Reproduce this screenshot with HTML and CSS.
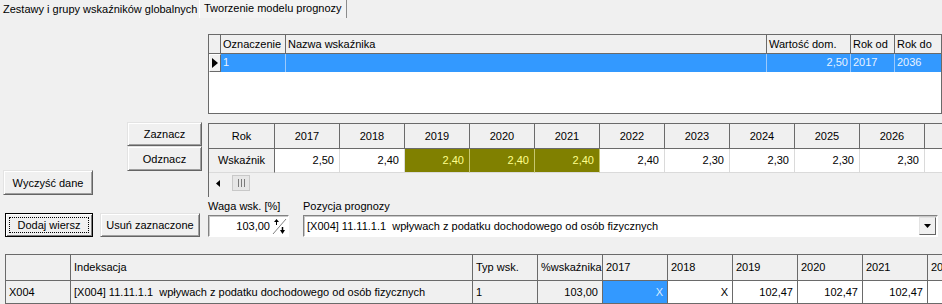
FILE: index.html
```html
<!DOCTYPE html>
<html lang="pl">
<head>
<meta charset="utf-8">
<title>Tworzenie modelu prognozy</title>
<link rel="stylesheet" href="styles.css">
</head>
<body>
<div class="tabs">
  <div class="tab tab-first">Zestawy i grupy wskaźników globalnych</div>
  <div class="tab tab-active">Tworzenie modelu prognozy</div>
</div>

<div class="top-grid">
  <div class="tg-row tg-head">
    <div class="c ind-h"></div>
    <div class="c">Oznaczenie</div>
    <div class="c">Nazwa wskaźnika</div>
    <div class="c">Wartość dom.</div>
    <div class="c">Rok od</div>
    <div class="c">Rok do</div>
  </div>
  <div class="tg-row tg-sel">
    <div class="c ind"><svg width="8" height="12" viewBox="0 0 8 12"><polygon points="1,1 7,6 1,11" fill="#000"/></svg></div>
    <div class="c">1</div>
    <div class="c"></div>
    <div class="c num">2,50</div>
    <div class="c">2017</div>
    <div class="c">2036</div>
  </div>
</div>

<div class="row2">
  <div class="left2">
    <div class="btn-stack">
      <button class="btn btn-z">Zaznacz</button>
      <button class="btn btn-o">Odznacz</button>
    </div>
    <button class="btn btn-clear">Wyczyść dane</button>
  </div>
  <div class="year-grid">
    <div class="yg-row yg-head">
      <div class="yc lab">Rok</div>
      <div class="yc">2017</div><div class="yc">2018</div><div class="yc">2019</div><div class="yc">2020</div><div class="yc">2021</div><div class="yc">2022</div><div class="yc">2023</div><div class="yc">2024</div><div class="yc">2025</div><div class="yc">2026</div><div class="yc"></div>
    </div>
    <div class="yg-row yg-data">
      <div class="yc lab">Wskaźnik</div>
      <div class="yc">2,50</div><div class="yc">2,40</div><div class="yc hi">2,40</div><div class="yc hi">2,40</div><div class="yc hi">2,40</div><div class="yc">2,40</div><div class="yc">2,30</div><div class="yc">2,30</div><div class="yc">2,30</div><div class="yc">2,30</div><div class="yc"></div>
    </div>
    <div class="hscroll">
      <svg class="arr" width="5" height="7" viewBox="0 0 5 7"><polygon points="4,0 0,3.5 4,7" fill="#000"/></svg>
      <div class="thumb"><span></span><span></span><span></span></div>
    </div>
  </div>
</div>

<div class="row3">
  <button class="btn btn-add"><span class="focus">Dodaj wiersz</span></button>
  <button class="btn btn-del">Usuń zaznaczone</button>
  <div class="field f-waga">
    <div class="flabel">Waga wsk. [%]</div>
    <div class="input spin-input">
      <span class="val">103,00</span>
      <svg class="spin" width="15" height="17" viewBox="0 0 15 17">
        <line x1="1" y1="16" x2="14" y2="1" stroke="#808080" stroke-width="1"/>
        <line x1="4.5" y1="2" x2="4.5" y2="7" stroke="#000" stroke-width="1"/>
        <polygon points="2,4 4.5,1 7,4" fill="#000"/>
        <line x1="10.5" y1="9" x2="10.5" y2="14" stroke="#000" stroke-width="1.5"/>
        <polygon points="8,12 10.5,16 13,12" fill="#000"/>
      </svg>
    </div>
  </div>
  <div class="field f-poz">
    <div class="flabel">Pozycja prognozy</div>
    <div class="input combo">
      <span class="val">[X004] 11.11.1.1&nbsp; wpływach z podatku dochodowego od osób fizycznych</span>
      <div class="drop"><svg width="7" height="4" viewBox="0 0 7 4"><polygon points="0,0 7,0 3.5,4" fill="#000"/></svg></div>
    </div>
  </div>
</div>

<div class="bottom-grid">
  <div class="bg-row bg-head">
    <div class="bc w64"></div>
    <div class="bc w402">Indeksacja</div>
    <div class="bc">Typ wsk.</div>
    <div class="bc">%wskaźnika</div>
    <div class="bc">2017</div>
    <div class="bc">2018</div>
    <div class="bc">2019</div>
    <div class="bc">2020</div>
    <div class="bc">2021</div>
    <div class="bc">2022</div>
  </div>
  <div class="bg-row bg-data">
    <div class="bc w64 gray">X004</div>
    <div class="bc w402 gray">[X004] 11.11.1.1&nbsp; wpływach z podatku dochodowego od osób fizycznych</div>
    <div class="bc gray">1</div>
    <div class="bc gray num">103,00</div>
    <div class="bc sel num">X</div>
    <div class="bc num">X</div>
    <div class="bc num">102,47</div>
    <div class="bc num">102,47</div>
    <div class="bc num">102,47</div>
    <div class="bc num"></div>
  </div>
</div>
</body>
</html>
```

FILE: styles.css
```css
* { box-sizing: border-box; }

body {
  margin: 0;
  width: 942px;
  height: 304px;
  overflow: hidden;
  background: #f0f0f0;
  font-family: "Liberation Sans", Arial, sans-serif;
  font-size: 11px;
  color: #000;
}

/* Tabs */
.tabs {
  display: flex;
  height: 19px;
}
.tab {
  height: 18px;
  line-height: 17px;
  white-space: nowrap;
}
.tab-first {
  width: 199px;
  padding-left: 3px;
  margin-top: 1px;
}
.tab-active {
  width: 148px;
  padding-left: 4px;
  border-left: 1px solid #ffffff;
  border-right: 1px solid #8c8c8c;
  background: #f3f3f3;
}

/* Top grid */
.top-grid {
  margin: 15px 0 0 208px;
  width: 734px;
  height: 80px;
  border: 1px solid #6a6a6a;
  background: #fff;
  overflow: hidden;
}
.tg-row {
  display: grid;
  grid-template-columns: 12px 65px 481px 84px 44px 46px;
}
.tg-row .c {
  padding: 0 2px;
  white-space: nowrap;
  overflow: hidden;
}
.tg-head .c {
  height: 19px;
  line-height: 18px;
  background: #f0f0f0;
  border-right: 1px solid #6a6a6a;
  border-bottom: 1px solid #6a6a6a;
}
.tg-head .c:last-child { border-right: none; }
.tg-sel .c {
  height: 18px;
  line-height: 17px;
  background: #3399ff;
  color: #e8f3ff;
  border-right: 1px solid #9cc9fb;
}
.tg-sel .c:last-child { border-right: none; }
.tg-sel .c.ind {
  background: #f0f0f0;
  border-top: 1px solid #fff;
  border-left: 1px solid #fff;
  border-right: 1px solid #6a6a6a;
  border-bottom: 1px solid #6a6a6a;
  padding: 2px 0 0 1px;
}
.tg-sel .c.ind svg { display: block; }
.num { text-align: right; }

/* Row 2 */
.row2 {
  display: flex;
  margin-top: 8px;
}
.left2 {
  width: 208px;
  flex: none;
}
.btn-stack {
  margin-left: 127px;
  width: 75px;
  display: flex;
  flex-direction: column;
}
.btn {
  font-family: inherit;
  font-size: 11px;
  color: #000;
  background: #f0f0f0;
  border: 1px solid;
  border-color: #e3e3e3 #646464 #646464 #e3e3e3;
  box-shadow: inset 1px 1px 0 #ffffff, inset -1px -1px 0 #a0a0a0;
  padding: 0;
  margin: 0;
  display: block;
}
.btn-z { height: 24px; width: 75px; }
.btn-o { height: 25px; width: 75px; }
.btn-clear {
  margin: -1px 0 0 3px;
  width: 90px;
  height: 25px;
}

.year-grid {
  margin-top: 1px;
  width: 734px;
  height: 74px;
  border-left: 1px solid #6a6a6a;
  border-top: 1px solid #6a6a6a;
  overflow: hidden;
}
.yg-row {
  display: flex;
}
.yc {
  flex: none;
  width: 65px;
  white-space: nowrap;
}
.yc.lab { width: 66px; text-align: center; }
.yg-head .yc {
  height: 25px;
  line-height: 24px;
  text-align: center;
  background: #f0f0f0;
  border-right: 1px solid #6a6a6a;
  border-bottom: 1px solid #6a6a6a;
}
.yg-data .yc {
  height: 24px;
  line-height: 23px;
  text-align: right;
  padding-right: 5px;
  background: #fff;
  border-right: 1px solid #dadada;
  border-bottom: 1px solid #dadada;
}
.yg-data .yc.lab {
  text-align: center;
  padding-right: 0;
  background: #f0f0f0;
  border-right: 1px solid #6a6a6a;
}
.yg-data .yc.hi {
  background: #808000;
  color: #ffff8c;
  border-right: 1px solid #c8c870;
}
.hscroll {
  height: 20px;
  display: flex;
  align-items: center;
  padding-left: 7px;
}
.hscroll .arr { margin-right: 11px; }
.thumb {
  width: 18px;
  height: 16px;
  border: 1px solid #c8c8c8;
  background: #e6e6e6;
  display: flex;
  justify-content: center;
  align-items: center;
  gap: 2px;
}
.thumb span {
  width: 1px;
  height: 8px;
  background: #7a7a7a;
}

/* Row 3 */
.row3 {
  display: flex;
  align-items: flex-end;
  height: 40px;
}
.btn-add {
  margin-left: 5px;
  width: 88px;
  height: 24px;
  border-color: #000;
  box-shadow: inset 1px 1px 0 #ffffff, inset -1px -1px 0 #808080;
  padding: 3px;
}
.btn-add .focus {
  display: block;
  height: 100%;
  line-height: 15px;
  border: 1px dotted #000;
}
.btn-del {
  margin-left: 7px;
  width: 100px;
  height: 24px;
}
.field { display: flex; flex-direction: column; }
.flabel {
  height: 15px;
  line-height: 13px;
  white-space: nowrap;
}
.f-waga { margin-left: 8px; width: 81px; }
.f-poz { margin-left: 14px; width: 635px; }
.input {
  height: 22px;
  background: #fff;
  border: 1px solid;
  border-color: #828282 #ffffff #ffffff #828282;
  box-shadow: inset 1px 1px 0 #c8c8c8;
  display: flex;
  align-items: center;
  position: relative;
}
.spin-input { justify-content: flex-end; padding-right: 1px; }
.spin-input .val { margin-right: 2px; }
.spin { display: block; }
.combo .val {
  flex: 1;
  padding-left: 3px;
  white-space: nowrap;
  overflow: hidden;
}
.drop {
  width: 17px;
  height: 18px;
  margin-right: 1px;
  background: #f0f0f0;
  border: 1px solid;
  border-color: #e3e3e3 #646464 #646464 #e3e3e3;
  display: flex;
  align-items: center;
  justify-content: center;
}
.drop svg { display: block; }

/* Bottom grid */
.bottom-grid {
  margin: 17px 0 0 5px;
  width: 937px;
  border-left: 1px solid #6a6a6a;
  border-top: 1px solid #6a6a6a;
  overflow: hidden;
}
.bg-row { display: flex; }
.bc {
  flex: none;
  width: 65px;
  padding: 0 3px;
  white-space: nowrap;
  overflow: hidden;
  border-right: 1px solid #6a6a6a;
  border-bottom: 1px solid #6a6a6a;
}
.bc.w64 { width: 65px; }
.bc.w402 { width: 402px; }
.bg-head .bc {
  height: 26px;
  line-height: 25px;
  background: #f0f0f0;
}
.bg-data .bc {
  height: 23px;
  line-height: 22px;
  background: #fff;
}
.bg-data .bc.gray { background: #f0f0f0; }
.bg-data .bc.sel { background: #3399ff; color: #d8ecff; }
.bc.num { text-align: right; padding-right: 4px; }
```
